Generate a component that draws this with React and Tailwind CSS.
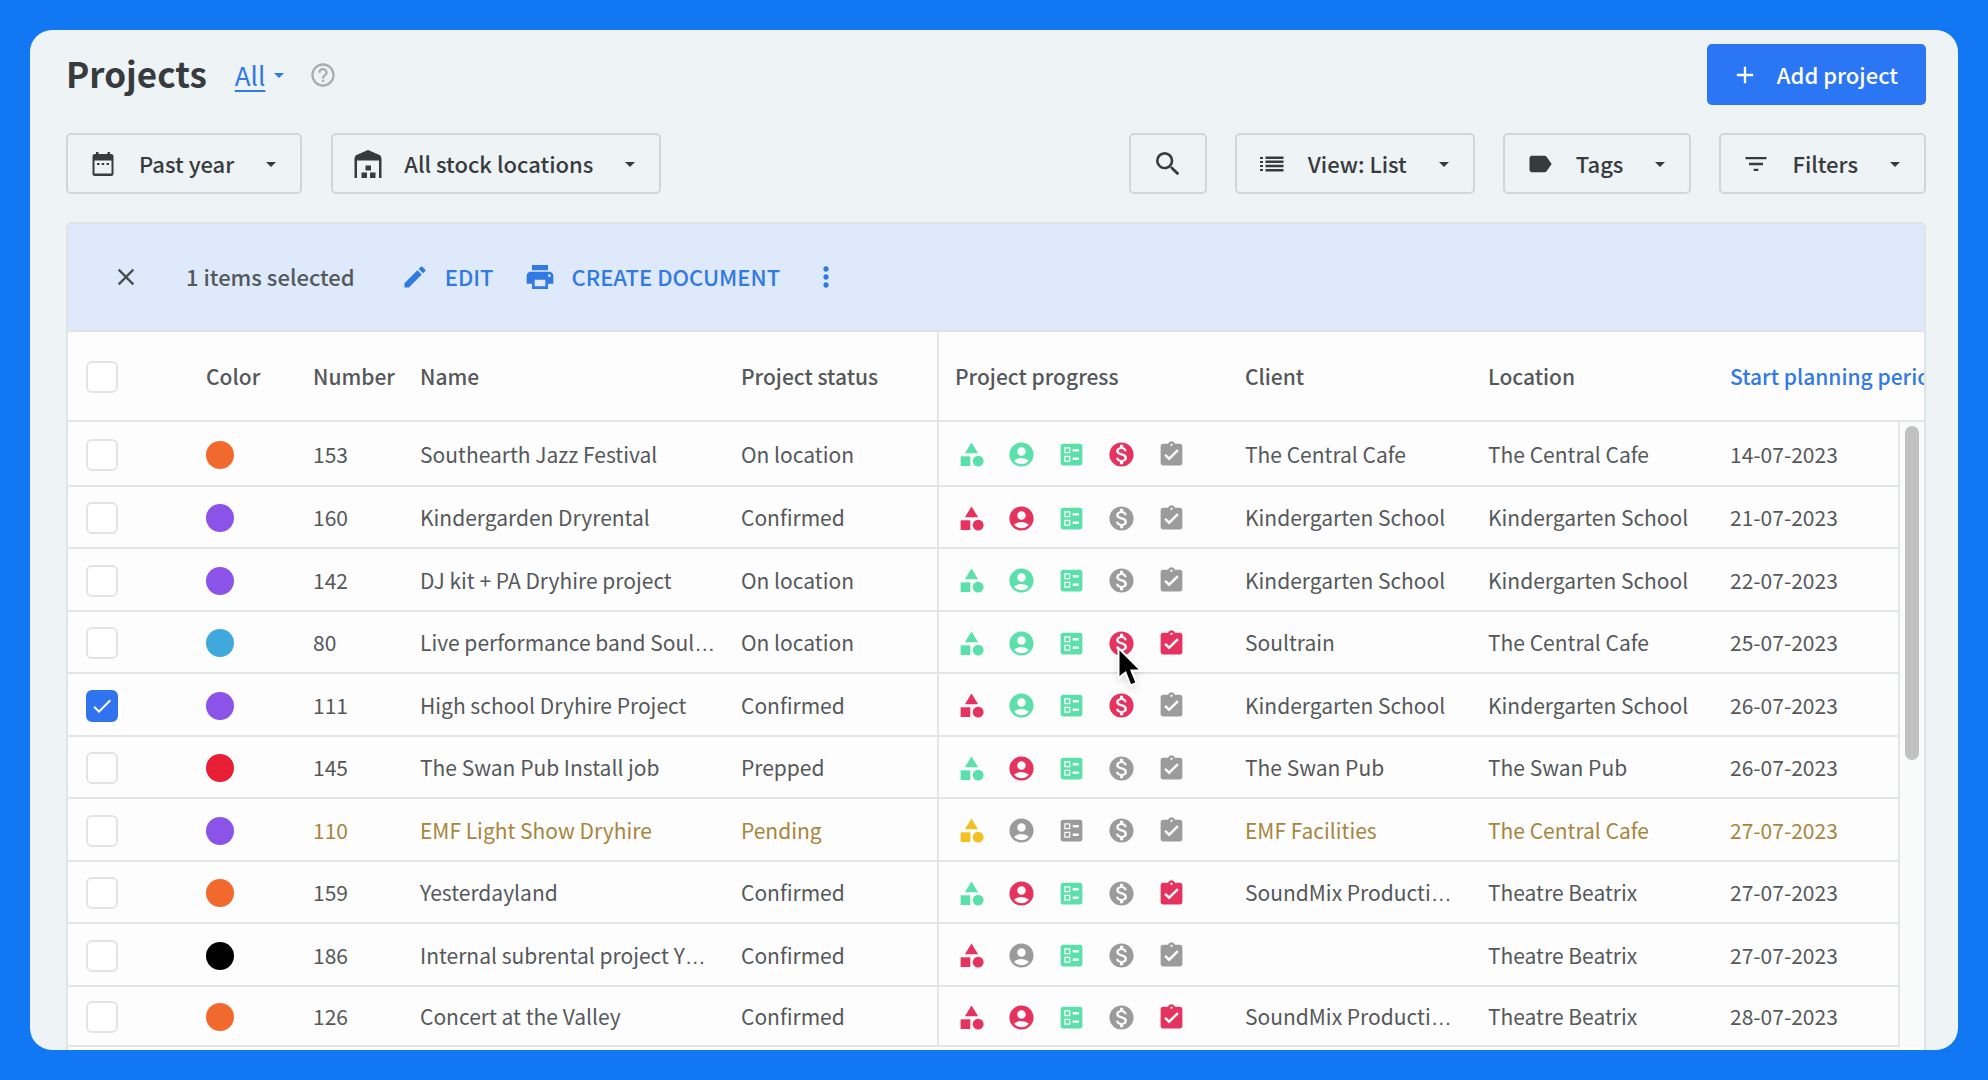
import React from "react";
import {
  MdCategory, MdAccountCircle, MdBallot, MdMonetizationOn, MdAssignmentTurnedIn,
  MdArrowDropDown, MdSearch, MdLabel, MdFilterList, MdClose, MdEdit,
  MdPrint, MdMoreVert, MdAdd, MdHelpOutline, MdCheck,
} from "react-icons/md";

const TONES = { g: "text-[#5ce0ab]", r: "text-[#e5325f]", x: "text-[#9b9b9b]", y: "text-[#f3c122]" };
const PROGRESS = [
  [MdCategory, "Equipment"],
  [MdAccountCircle, "Crew"],
  [MdBallot, "Planning"],
  [MdMonetizationOn, "Invoicing"],
  [MdAssignmentTurnedIn, "Tasks"],
];

const ROWS = [
  { color: "bg-[#f1692c]", n: "153", name: "Southearth Jazz Festival", status: "On location", p: "gggrx", client: "The Central Cafe", loc: "The Central Cafe", date: "14-07-2023" },
  { color: "bg-[#8b53e8]", n: "160", name: "Kindergarden Dryrental", status: "Confirmed", p: "rrgxx", client: "Kindergarten School", loc: "Kindergarten School", date: "21-07-2023" },
  { color: "bg-[#8b53e8]", n: "142", name: "DJ kit + PA Dryhire project", status: "On location", p: "gggxx", client: "Kindergarten School", loc: "Kindergarten School", date: "22-07-2023" },
  { color: "bg-[#3fa9de]", n: "80", name: "Live performance band Soul…", status: "On location", p: "gggrr", client: "Soultrain", loc: "The Central Cafe", date: "25-07-2023", cursor: true },
  { color: "bg-[#8b53e8]", n: "111", name: "High school Dryhire Project", status: "Confirmed", p: "rggrx", client: "Kindergarten School", loc: "Kindergarten School", date: "26-07-2023", checked: true },
  { color: "bg-[#e91d33]", n: "145", name: "The Swan Pub Install job", status: "Prepped", p: "grgxx", client: "The Swan Pub", loc: "The Swan Pub", date: "26-07-2023" },
  { color: "bg-[#8b53e8]", n: "110", name: "EMF Light Show Dryhire", status: "Pending", p: "yxxxx", client: "EMF Facilities", loc: "The Central Cafe", date: "27-07-2023", pending: true },
  { color: "bg-[#f1692c]", n: "159", name: "Yesterdayland", status: "Confirmed", p: "grgxr", client: "SoundMix Producti…", loc: "Theatre Beatrix", date: "27-07-2023" },
  { color: "bg-black", n: "186", name: "Internal subrental project Y…", status: "Confirmed", p: "rxgxx", client: "", loc: "Theatre Beatrix", date: "27-07-2023" },
  { color: "bg-[#f1692c]", n: "126", name: "Concert at the Valley", status: "Confirmed", p: "rrgxr", client: "SoundMix Producti…", loc: "Theatre Beatrix", date: "28-07-2023" },
];

// The CJK face centres its ellipsis vertically, so a shortened label takes it from a Latin face.
function Label({ text }) {
  if (!text.endsWith("…")) return text;
  return (
    <>
      {text.slice(0, -1)}
      <span className="font-['Liberation_Sans',sans-serif] leading-none">…</span>
    </>
  );
}

function CalendarIcon() {
  return (
    <svg viewBox="0 0 24 26" className="h-[26px] w-6" fill="currentColor" aria-hidden="true">
      <path fillRule="evenodd" d="M5 1h2.500v2h9V1H19v2h1a2.500 2.500 0 0 1 2.500 2.500v17A2.500 2.500 0 0 1 20 25H4a2.500 2.500 0 0 1-2.500-2.500v-17A2.500 2.500 0 0 1 4 3h1ZM3.500 9.500V22.500H20.500V9.500Z" />
      <path d="M6 12h2.500v2H6zM10.700 12h2.500v2h-2.500zM15.500 12H18v2h-2.500z" />
    </svg>
  );
}

function WarehouseIcon() {
  return (
    <svg viewBox="0 0 28 28" className="size-7 overflow-visible" fill="currentColor" aria-hidden="true">
      <path d="M0.500 28V9C0.500 6.500 1.500 5.500 3 4.800L14 0L25 4.800C26.500 5.500 27.500 6.500 27.500 9V28H25V10.500H3V28Z" />
      <path d="M11.500 15.500h5.500v5h-5.500zM7.500 22.500h5.500V28H7.500zM16 22.500h5.500V28H16z" />
    </svg>
  );
}

function ListIcon() {
  return (
    <svg viewBox="0 0 24 16" className="h-4 w-6" fill="currentColor" aria-hidden="true">
      <path d="M0 1h3v2H0zM0 5h3v2H0zM0 9h3v2H0zM0 13h3v2H0zM5.500 .5H23.500v2.500H5.500zM5.500 4.600H23.500v2.500H5.500zM5.500 8.800H23.500v2.500H5.500zM5.500 13H23.500v2.500H5.500z" />
    </svg>
  );
}

function Cursor() {
  return (
    <svg viewBox="0 0 26 42" className="pointer-events-none absolute top-[34px] left-[178px] z-10 h-[42px] w-[26px] drop-shadow-md" aria-hidden="true">
      <path d="M1.500 2V32L8.500 26.500L13.500 39.500L19.500 37L14.500 24.500H24Z" fill="#000" stroke="#fff" strokeWidth="2" />
    </svg>
  );
}

function Tick({ label, checked }) {
  return (
    <span className="grid size-8 place-items-center">
      <input
        type="checkbox"
        aria-label={label}
        defaultChecked={checked}
        className="peer col-start-1 row-start-1 size-8 appearance-none rounded-md border-2 border-[#e2e3e4] bg-white checked:border-[#2f74ee] checked:bg-[#2f74ee]"
      />
      <MdCheck className="pointer-events-none invisible col-start-1 row-start-1 size-6 text-white peer-checked:visible" />
    </span>
  );
}

function ToolButton({ icon, children }) {
  return (
    <button type="button" className="flex h-[61px] items-center rounded-[5px] border-2 border-[#d3d6d8] pr-[17px] pl-[21px] text-[22px] font-medium text-[#383b3e]">
      <span className="mr-[22px] flex w-7 justify-center">{icon}</span>
      <span className="pb-0.5">{children}</span>
      <MdArrowDropDown className="ml-[25px] size-6" />
    </button>
  );
}

export default function App() {
  return (
    <main className="flex h-screen flex-col bg-[#1177f2] p-[30px] font-['Noto_Sans_CJK_SC','Noto_Sans_CJK_JP',sans-serif] leading-8 text-[#55585b]">
      <section className="flex min-h-0 flex-1 flex-col overflow-hidden rounded-[22px] bg-[#eef3f6] pt-3.5 pr-8 pl-9">
        <header className="flex shrink-0 items-center">
          <h1 className="pb-1 text-[35px] leading-10 font-bold text-[#383b3e]">Projects</h1>
          <a href="#all" className="ml-7 flex items-center text-[#3179e3]">
            <span className="text-[26px] underline underline-offset-4">All</span>
            <MdArrowDropDown className="ml-0.5 size-6" />
          </a>
          <button type="button" aria-label="Help" className="ml-[18px] text-[#aaacae]">
            <MdHelpOutline className="size-7" />
          </button>
          <button type="button" className="ml-auto flex h-[61px] items-center rounded-[5px] bg-[#2b76f5] pr-7 pl-6 text-[22px] font-medium text-white">
            <MdAdd className="mr-[18px] size-7" />
            <span className="pb-0.5">Add project</span>
          </button>
        </header>

        <div className="mt-7 flex shrink-0 items-center justify-between">
          <div className="flex gap-[29px]">
            <ToolButton icon={<CalendarIcon />}>Past year</ToolButton>
            <ToolButton icon={<WarehouseIcon />}>All stock locations</ToolButton>
          </div>
          <div className="flex gap-7">
            <button type="button" aria-label="Search" className="flex h-[61px] w-[78px] items-center justify-center rounded-[5px] border-2 border-[#d3d6d8] text-[#383b3e]">
              <MdSearch className="size-8" />
            </button>
            <ToolButton icon={<ListIcon />}>View: List</ToolButton>
            <ToolButton icon={<MdLabel className="size-7" />}>Tags</ToolButton>
            <ToolButton icon={<MdFilterList className="size-7" />}>Filters</ToolButton>
          </div>
        </div>

        <div className="mt-7 flex min-h-0 flex-1 flex-col overflow-hidden rounded-t-md border-x-2 border-t-2 border-[#e0e3e6] bg-[#fdfdfd]">
          <div className="flex h-[108px] shrink-0 items-center border-b-2 border-[#e0e3e6] bg-[#deeafc] pl-11 text-[22px] font-medium">
            <button type="button" aria-label="Clear selection" className="text-[#4a4d50]">
              <MdClose className="size-7" />
            </button>
            <span className="ml-[46px] pb-0.5">1 items selected</span>
            <button type="button" className="ml-[46px] flex items-center text-[#3179e3]">
              <MdEdit className="mr-4 size-7" />
              <span className="pb-0.5">EDIT</span>
            </button>
            <button type="button" className="ml-[30px] flex items-center text-[#3179e3]">
              <MdPrint className="mr-4 size-8" />
              <span className="pb-0.5">CREATE DOCUMENT</span>
            </button>
            <button type="button" aria-label="More actions" className="ml-[30px] text-[#3179e3]">
              <MdMoreVert className="size-8" />
            </button>
          </div>

          <table className="w-full table-fixed border-separate border-spacing-0 text-left text-[21px] whitespace-nowrap">
            <colgroup>
              <col className="w-[138px]" />
              <col className="w-[107px]" />
              <col className="w-[107px]" />
              <col />
              <col className="w-[196px]" />
              <col className="w-[308px]" />
              <col className="w-[243px]" />
              <col className="w-[242px]" />
              <col className="w-[168px]" />
              <col className="w-[26px]" />
            </colgroup>
            <thead>
              <tr className="h-[88px] *:border-[#e4e5e6] *:font-medium">
                <th className="pt-0.5 pl-[18px]"><Tick label="Select all projects" /></th>
                <th>Color</th>
                <th>Number</th>
                <th>Name</th>
                <th>Project status</th>
                <th className="border-l-2 pl-4">Project progress</th>
                <th>Client</th>
                <th>Location</th>
                <th colSpan={2} className="overflow-hidden text-[#3179e3]">Start planning period</th>
              </tr>
            </thead>
            <tbody>
              {ROWS.map((r, i) => (
                <tr key={r.n} className={`*:border-t-2 *:border-[#e4e5e6] last:*:border-b-2 ${i === 0 ? "h-[65px]" : "odd:h-[63px] even:h-[62px]"} ${r.pending ? "text-[#a8853c]" : ""}`}>
                  <td className="pt-0.5 pl-[18px]"><Tick label={`Select ${r.name}`} checked={r.checked} /></td>
                  <td className="pt-0.5"><span className={`block size-7 rounded-full ${r.color}`} /></td>
                  <td>{r.n}</td>
                  <td><Label text={r.name} /></td>
                  <td>{r.status}</td>
                  <td className="relative border-l-2 pt-0.5 pl-[18px]">
                    <div className="flex gap-[21px]">
                      {PROGRESS.map(([Icon, label], k) => (
                        <Icon key={label} title={label} className={`size-[29px] ${TONES[r.p[k]]}`} />
                      ))}
                    </div>
                    {r.cursor && <Cursor />}
                  </td>
                  <td><Label text={r.client} /></td>
                  <td>{r.loc}</td>
                  <td>{r.date}</td>
                  {i === 0 && (
                    <td rowSpan={ROWS.length} className="border-l-2 bg-[#f9fafa] pt-1 pl-[5px] align-top">
                      <div className="h-[334px] w-3.5 rounded-full bg-[#c1c1c1]" />
                    </td>
                  )}
                </tr>
              ))}
            </tbody>
          </table>
        </div>
      </section>
    </main>
  );
}
